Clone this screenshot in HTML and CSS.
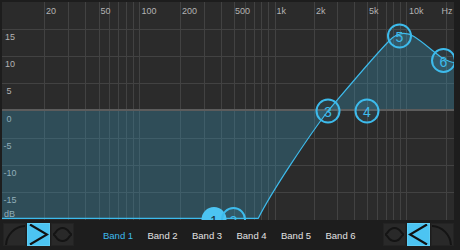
FILE: index.html
```html
<!DOCTYPE html>
<html>
	<head>
		<meta charset="UTF-8">
		<title>EQ</title>
		<link rel="stylesheet" href="styles.css">
	</head>
	<body>
		<div class="eq">
			<div class="graph">
				<svg width="452" height="218" viewBox="2 2 452 218">
					<!-- grid -->
					<path class="grid" d="M44.5 2V220M68.5 2V220M85.5 2V220M99.5 2V220M109.5 2V220M118.5 2V220M126.5 2V220M133.5 2V220M139.5 2V220M180.5 2V220M204.5 2V220M221.5 2V220M234.5 2V220M245.5 2V220M254.5 2V220M261.5 2V220M268.5 2V220M275.5 2V220M314.5 2V220M337.5 2V220M354.5 2V220M367.5 2V220M377.5 2V220M386.5 2V220M393.5 2V220M400.5 2V220M406.5 2V220M446.5 2V220M2 29.5H454M2 56.5H454M2 83.5H454M2 138.5H454M2 165.5H454M2 192.5H454"/>
					<g class="freq">
						<text x="46" y="13.5">20</text>
						<text x="100.5" y="13.5">50</text>
						<text x="141.5" y="13.5">100</text>
						<text x="182" y="13.5">200</text>
						<text x="235" y="13.5">500</text>
						<text x="276.5" y="13.5">1k</text>
						<text x="316" y="13.5">2k</text>
						<text x="369" y="13.5">5k</text>
						<text x="409" y="13.5">10k</text>
						<text x="441.5" y="13.5">Hz</text>
					</g>
					<g class="gain">
						<text x="5" y="40">15</text>
						<text x="5" y="66.5">10</text>
						<text x="6.5" y="93.5">5</text>
						<text x="6.5" y="121.5">0</text>
						<text x="3.5" y="148.5">-5</text>
						<text x="3.5" y="175.5">-10</text>
						<text x="3.5" y="202.5">-15</text>
						<text x="4" y="217">dB</text>
					</g>
					<!-- response -->
					<path class="area" d="M2 110V218.3H258.3C272 191 310 134.4 328 111C345 91 375 55 390 40C397 33 405 31 414 36.5C423 42 436 54 443 58.5C450 62 452 62.5 454 62.5V110Z"/>
					<path class="zero" d="M2 110H454"/>
					<path class="curve" d="M2 218.3H258.3C272 191 310 134.4 328 111C345 91 375 55 390 40C397 33 405 31 414 36.5C423 42 436 54 443 58.5C450 62 452 62.5 454 62.5"/>
					<!-- band handles -->
					<g class="node selected">
						<circle cx="214" cy="219.5" r="11.5"/>
						<text x="214" y="225.5">1</text>
					</g>
					<g class="node">
						<circle cx="233.5" cy="219.5" r="11.5"/>
						<text x="233.5" y="225.5">2</text>
					</g>
					<g class="node">
						<circle cx="328" cy="111" r="11.5"/>
						<text x="328" y="117">3</text>
					</g>
					<g class="node">
						<circle cx="367" cy="111" r="11.5"/>
						<text x="367" y="117">4</text>
					</g>
					<g class="node">
						<circle cx="399.5" cy="36" r="11.5"/>
						<text x="399.5" y="42">5</text>
					</g>
					<g class="node">
						<circle cx="443.5" cy="60.5" r="11.5"/>
						<text x="443.5" y="66.5">6</text>
					</g>
				</svg>
			</div>
			<div class="toolbar">
				<div class="types">
					<button class="type"><svg width="23" height="23"><path d="M3 23A20 20 0 0 1 23 3"/></svg></button>
					<button class="type on"><svg width="23" height="23"><path d="M3 1.5L20 11.5L3 21.5"/></svg></button>
					<button class="type"><svg width="23" height="23"><path d="M2 11.5C5 11.5 5 5 11.5 5C18 5 18 11.5 21 11.5M2 11.5C5 11.5 5 18 11.5 18C18 18 18 11.5 21 11.5"/></svg></button>
				</div>
				<div class="bands">
					<span class="band active">Band 1</span>
					<span class="band">Band 2</span>
					<span class="band">Band 3</span>
					<span class="band">Band 4</span>
					<span class="band">Band 5</span>
					<span class="band">Band 6</span>
				</div>
				<div class="types right">
					<button class="type"><svg width="23" height="23"><path d="M2 11.5C5 11.5 5 5 11.5 5C18 5 18 11.5 21 11.5M2 11.5C5 11.5 5 18 11.5 18C18 18 18 11.5 21 11.5"/></svg></button>
					<button class="type on"><svg width="23" height="23"><path d="M20 1.5L3 11.5L20 21.5"/></svg></button>
					<button class="type"><svg width="23" height="23"><path d="M0 3A20 20 0 0 1 20 23"/></svg></button>
				</div>
			</div>
		</div>
	</body>
</html>
```

FILE: styles.css
```css
body {
	margin: 0;
	background: #1d1d1d;
	font-family: "Liberation Sans", Arial, sans-serif;
}

.eq {
	width: 460px;
	height: 250px;
	padding: 2px 6px 0 2px;
	box-sizing: border-box;
}

.graph {
	height: 218px;
	background: #2b2b2b;
}

.graph svg {
	display: block;
}

.grid {
	stroke: #424242;
	stroke-width: 1;
	fill: none;
}

.freq text,
.gain text {
	font-size: 9px;
	fill: #b3b3b3;
}

.area {
	fill: rgba(58, 165, 205, 0.28);
	stroke: none;
}

.zero {
	stroke: #5c5c5c;
	stroke-width: 2;
}

.curve {
	fill: none;
	stroke: #3dbbec;
	stroke-width: 1.2;
	stroke-linejoin: round;
}

.node circle {
	fill: rgba(76, 196, 242, 0.1);
	stroke: #3dbbec;
	stroke-width: 2;
}

.node text {
	font-size: 14px;
	fill: #3dbbec;
	text-anchor: middle;
}

.node.selected circle {
	fill: #4cc4f2;
	stroke: #4cc4f2;
}

.node.selected text {
	fill: #16323f;
}

.toolbar {
	display: flex;
	align-items: center;
	height: 30px;
	padding: 3px 0 4px 1px;
	box-sizing: border-box;
}

.types {
	display: flex;
	gap: 1px;
}

.types.right {
	margin-left: auto;
}

.type {
	width: 23px;
	height: 23px;
	padding: 0;
	border: 1px solid #232323;
	background: #292929;
	overflow: hidden;
}

.type svg {
	display: block;
	margin: -1px;
}

.type path {
	fill: none;
	stroke: #141414;
	stroke-width: 2;
}

.type.on {
	background: #4cc4f2;
	border-color: #5ccdf5;
}

.type.on path {
	stroke: #111111;
	stroke-width: 2.2;
}

.bands {
	display: flex;
	margin-left: 29px;
}

.band {
	width: 44.5px;
	font-size: 9.5px;
	color: #e2e2e2;
	margin-top: 2px;
}

.band.active {
	color: #3dbbec;
}
```
